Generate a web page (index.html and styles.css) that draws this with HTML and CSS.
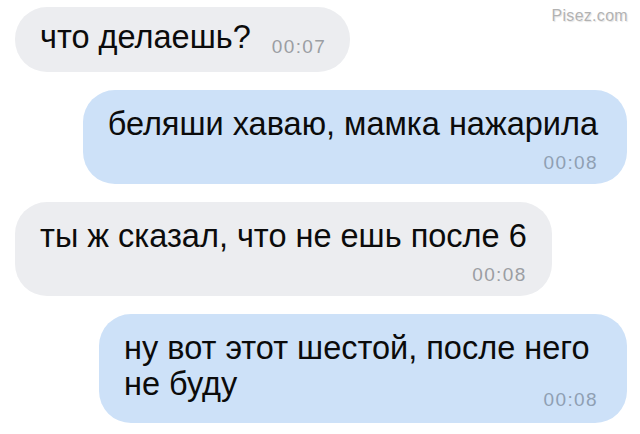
FILE: index.html
```html
<!DOCTYPE html>
<html lang="ru">
<head>
    <meta charset="UTF-8">
    <meta name="viewport" content="width=device-width, initial-scale=1.0">
    <title>Переписка</title>
    <link rel="stylesheet" href="styles.css">
</head>
<body>
    <div class="watermark">Pisez.com</div>

    <div class="chat">
        <!-- входящее, время в строке -->
        <div class="bubble in short">
            <span class="text">что делаешь?</span>
            <span class="time">00:07</span>
        </div>

        <div class="bubble out">
            <div class="text">беляши хаваю, мамка нажарила</div>
            <div class="time">00:08</div>
        </div>

        <div class="bubble in">
            <div class="text">ты ж сказал, что не ешь после 6</div>
            <div class="time">00:08</div>
        </div>

        <div class="bubble out long">
            <div class="text">ну вот этот шестой, после него<br>не буду<span class="time tail">00:08</span></div>
        </div>
    </div>
</body>
</html>
```

FILE: styles.css
```css
body {
    margin: 0;
    background: #fff;
    font-family: "Liberation Sans", Arial, sans-serif;
    color: #0b0b0b;
}

.watermark {
    position: absolute;
    top: 7px;
    right: 12px;
    font-size: 16px;
    letter-spacing: 0.3px;
    color: #b2b2b2;
    text-shadow: 0 0 1px #fff, 1px 1px 1px #e2e2e2;
}

.chat {
    display: flex;
    flex-direction: column;
    align-items: flex-start;
    gap: 18px;
    padding: 7px 13px 0 15px;
}

.bubble {
    max-width: 550px;
    padding: 16px 25px 9px 25px;
    border-radius: 32px;
}

.bubble.in {
    background-color: #ecedf0;
}

.bubble.out {
    align-self: flex-end;
    padding-right: 29px;
    background-color: #cde1f8;
}

.text {
    font-size: 32.5px;
    line-height: 36px;
}

.time {
    margin-top: 9px;
    font-size: 19px;
    line-height: 24px;
    letter-spacing: 1.4px;
    text-align: right;
    color: #9b9ea3;
}

.out .time {
    color: #8f9fb3;
}

/* короткое сообщение: время справа в той же строке */
.bubble.short {
    display: flex;
    align-items: baseline;
    gap: 21px;
    padding: 12px 24px 17px 25px;
}

.short .time {
    position: relative;
    top: 5px;
    margin-top: 0;
}

.bubble.long {
    width: 474px;
    padding-bottom: 11px;
}

.time.tail {
    float: right;
    margin: 22px 0 0 20px;
}
```
